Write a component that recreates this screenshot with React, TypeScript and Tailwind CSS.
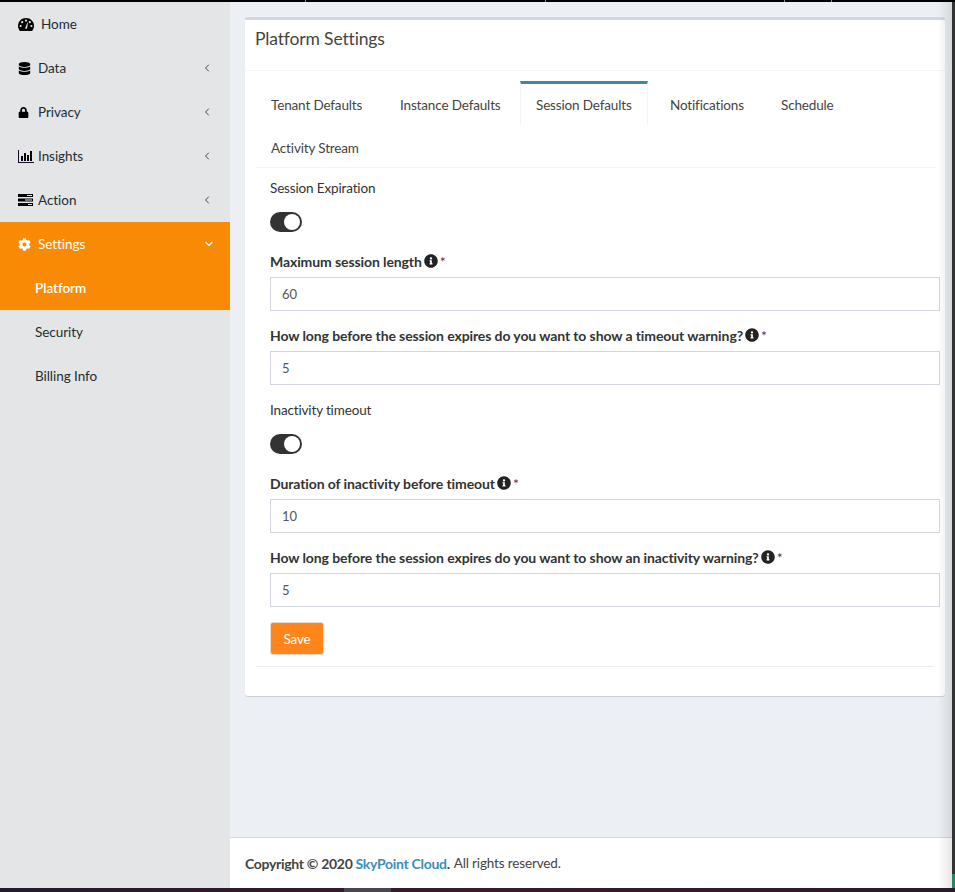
import React from "react";
import { FaDatabase, FaLock, FaCog, FaInfoCircle } from "react-icons/fa";
import { ChevronLeft, ChevronDown } from "lucide-react";

function GaugeIcon() {
  return (
    <svg width="16" height="13" viewBox="0 0 16 13" className="shrink-0">
      <path d="M8 0C3.6 0 0 3.4 0 7.8c0 1.9.7 3.7 1.9 5.2h12.2c1.2-1.5 1.9-3.3 1.9-5.2C16 3.4 12.4 0 8 0z" fill="#000" />
      <circle cx="8" cy="2.6" r="1.1" fill="#e4e5e7" />
      <circle cx="4.2" cy="4.2" r="1.1" fill="#e4e5e7" />
      <circle cx="11.8" cy="4.2" r="1.1" fill="#e4e5e7" />
      <circle cx="2.6" cy="8" r="1.1" fill="#e4e5e7" />
      <circle cx="13.4" cy="8" r="1.1" fill="#e4e5e7" />
      <path d="M7 10.5 L9.4 4.6 L9.9 4.8 L9 10.8 z" fill="#e4e5e7" />
    </svg>
  );
}

function BarsIcon() {
  return (
    <svg width="16" height="13" viewBox="0 0 16 13" className="shrink-0">
      <path d="M0 0h1v12h15v1H0z" fill="#1a0a2a" />
      <rect x="3" y="6" width="2" height="5" fill="#000" />
      <rect x="6" y="3" width="2" height="8" fill="#000" />
      <rect x="9" y="5" width="2" height="6" fill="#000" />
      <rect x="12" y="1" width="2" height="10" fill="#000" />
    </svg>
  );
}

function RowsIcon() {
  return (
    <svg width="15" height="12" viewBox="0 0 15 12" className="shrink-0">
      <rect x="0" y="0" width="15" height="3" fill="#000" />
      <rect x="0" y="4.5" width="15" height="3" fill="#000" />
      <rect x="0" y="9" width="15" height="3" fill="#000" />
      <rect x="9" y="1" width="5" height="1" fill="#e4e5e7" />
      <rect x="7" y="5.5" width="7" height="1" fill="#e4e5e7" />
      <rect x="10" y="10" width="4" height="1" fill="#e4e5e7" />
    </svg>
  );
}

const navItems = [
  { label: "Home", icon: <GaugeIcon />, slot: "w-[23px]" },
  { label: "Data", icon: <FaDatabase size={13} className="text-black" />, slot: "w-[20px]", arrow: true },
  { label: "Privacy", icon: <FaLock size={11} className="text-black" />, slot: "w-[20px]", arrow: true },
  { label: "Insights", icon: <BarsIcon />, slot: "w-[20px]", arrow: true },
  { label: "Action", icon: <RowsIcon />, slot: "w-[20px]", arrow: true },
];

function Sidebar() {
  return (
    <aside className="w-[230px] shrink-0 bg-[#e4e5e7] text-[13.5px] tracking-[-0.05px] text-[#222d32]">
      {navItems.map((it) => (
        <div key={it.label} className="h-[44px] flex items-center pl-[18px] pr-[17px]">
          <div className={`${it.slot} flex items-center`}>{it.icon}</div>
          <span>{it.label}</span>
          {it.arrow && <ChevronLeft size={12} strokeWidth={2} className="ml-auto text-[#444]" />}
        </div>
      ))}
      <div className="bg-[#f88a05] text-white">
        <div className="h-[44px] flex items-center pl-[18px] pr-[15px]">
          <div className="w-[20px] flex items-center"><FaCog size={13} /></div>
          <span>Settings</span>
          <ChevronDown size={12} strokeWidth={2.5} className="ml-auto" />
        </div>
        <div className="h-[44px] flex items-center pl-[35px] font-semibold">Platform</div>
      </div>
      <div className="h-[44px] flex items-center pl-[35px]">Security</div>
      <div className="h-[44px] flex items-center pl-[35px]">Billing Info</div>
    </aside>
  );
}

function Tab({ label, width, active }: { label: string; width: string; active?: boolean }) {
  return (
    <div
      className={
        active
          ? `${width} h-[44px] pl-[15px] pt-[1px] flex items-center border-t-[3px] border-x border-t-[#3f87ab] border-x-[#f4f4f4] text-[#444] whitespace-nowrap`
          : `${width} h-[44px] pl-[16px] pt-[4px] flex items-center text-[#444] whitespace-nowrap`
      }
    >
      {label}
    </div>
  );
}

function Toggle() {
  return (
    <div className="w-[32px] h-[20px] rounded-full bg-[#333] relative">
      <span className="absolute right-[2px] top-[2px] w-[16px] h-[16px] rounded-full bg-white" />
    </div>
  );
}

function Field({ label, value }: { label: string; value: string }) {
  return (
    <div>
      <div className="flex items-center h-[20px] text-[14px] tracking-[-0.1px] font-bold text-[#333]">
        <span>{label}</span>
        <FaInfoCircle size={14} className="ml-[2px] text-[#222]" />
        <span className="ml-[2px] font-normal text-[#6b2c4a]">*</span>
      </div>
      <div className="mt-[6px] w-[670px] h-[34px] pl-[11px] pt-[1px] flex items-center border border-[#d2d6de] bg-white text-[13px] text-[#555]">
        {value}
      </div>
    </div>
  );
}

export default function App() {
  return (
    <div
      className="w-[955px] h-[892px] flex flex-col overflow-hidden bg-[#ecf0f5] text-[13.5px] tracking-[-0.15px]"
      style={{ fontFamily: '"Lato", "Liberation Sans", sans-serif' }}
    >
      <div className="h-[2px] shrink-0 bg-black flex">
        <div className="w-[306px] border-r border-[#888]" />
        <div className="w-[240px] border-r border-[#888]" />
        <div className="w-[239px] border-r border-[#888]" />
        <div className="w-[47px] border-r border-[#888]" />
      </div>
      <div className="flex-1 min-h-0 flex">
        <div className="flex-1 min-w-0 flex">
          <Sidebar />
          <main className="relative flex-1 min-w-0 flex flex-col bg-[#ecf0f5]">
            <div className="flex-1 pt-[15px] pl-[15px] pr-[7px]">
              <section className="h-[679px] bg-white rounded-[3px] border-t-[3px] border-[#d2d6de] shadow-[0_1px_1px_rgba(0,0,0,0.15)]">
                <div className="h-[51px] px-[10px] pt-[9px] border-b border-[#f4f4f4] text-[17.5px] leading-[20px] text-[#444]">
                  Platform Settings
                </div>
                <div className="mx-[10px] mt-[10px] w-[680px] h-[586px] border-b border-[#e9ecef] rounded-[3px]">
                  <div className="border-b border-[#f4f4f4]">
                    <div className="flex">
                      <Tab label="Tenant Defaults" width="w-[129px]" />
                      <Tab label="Instance Defaults" width="w-[136px]" />
                      <Tab label="Session Defaults" width="w-[128px]" active />
                      <div className="w-[6px]" />
                      <Tab label="Notifications" width="w-[111px]" />
                      <Tab label="Schedule" width="w-[80px]" />
                    </div>
                    <div className="h-[42px] pl-[16px] pt-[4px] flex items-center text-[#444]">Activity Stream</div>
                  </div>
                  <div className="pl-[15px] pt-[10px] flex flex-col">
                    <div className="h-[20px] leading-[20px] text-[#333]">Session Expiration</div>
                    <div className="mt-[14px]"><Toggle /></div>
                    <div className="mt-[19px]"><Field label="Maximum session length" value="60" /></div>
                    <div className="mt-[14px]"><Field label="How long before the session expires do you want to show a timeout warning?" value="5" /></div>
                    <div className="mt-[15px] h-[20px] leading-[20px] text-[#333]">Inactivity timeout</div>
                    <div className="mt-[14px]"><Toggle /></div>
                    <div className="mt-[19px]"><Field label="Duration of inactivity before timeout" value="10" /></div>
                    <div className="mt-[14px]"><Field label="How long before the session expires do you want to show an inactivity warning?" value="5" /></div>
                    <div className="mt-[15px] w-[54px] h-[33px] pt-[1px] flex items-center justify-center bg-[#ff851b] border border-[#e5dcd3] rounded-[3px] text-white">
                      Save
                    </div>
                  </div>
                </div>
              </section>
            </div>
            <footer className="h-[51px] shrink-0 bg-white border-t border-[#d2d6de] pl-[15px] flex items-center text-[#444]">
              <span className="font-bold tracking-[-0.3px] text-[14px]">Copyright © 2020 <span className="text-[#3c8dbc]">SkyPoint Cloud</span>.</span>
              <span className="ml-[4px]">All rights reserved.</span>
            </footer>
            <div className="absolute inset-y-0 right-0 w-[14px] bg-gradient-to-l from-black/10 to-transparent" />
          </main>
        </div>
        <div className="w-[3px] shrink-0 bg-[#333] flex flex-col justify-end">
          <div className="h-[14px] bg-[#1f8a63]" />
        </div>
      </div>
      <div className="h-[4px] shrink-0 bg-gradient-to-r from-[#241a2e] via-[#3b1a2c] to-[#2a1a2c] flex">
        <div className="ml-[344px] w-[47px] bg-[#4a4550]" />
      </div>
    </div>
  );
}
